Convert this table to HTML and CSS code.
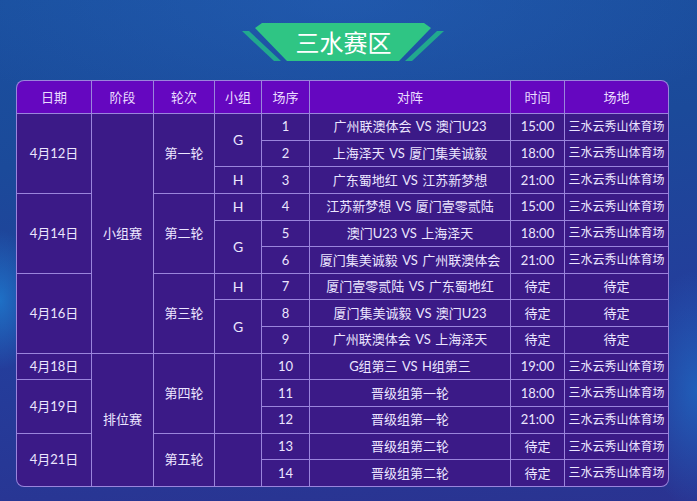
FILE: index.html
```html
<!DOCTYPE html>
<html lang="zh-CN">
<head>
<meta charset="utf-8">
<title>三水赛区</title>
<link rel="stylesheet" href="styles.css">
</head>
<body>
<div class="page">
  <div class="title">
    <svg class="title-bg" width="202" height="38" viewBox="0 0 202 38" aria-hidden="true">
      <polygon class="stripe" points="0,8 7,8 39,38 32,38"/>
      <polygon class="stripe" points="202,8 195,8 163,38 170,38"/>
      <polygon class="shape" points="13,5 20,0 182,0 189,5 157,38 45,38"/>
    </svg>
    <span class="title-text">三水赛区</span>
  </div>

  <div class="table">
    <div class="th first">日期</div>
    <div class="th">阶段</div>
    <div class="th">轮次</div>
    <div class="th">小组</div>
    <div class="th">场序</div>
    <div class="th">对阵</div>
    <div class="th">时间</div>
    <div class="th last">场地</div>

    <div class="td r3">4月12日</div>
    <div class="td r9">小组赛</div>
    <div class="td r3">第一轮</div>
    <div class="td grp r2">G</div>
    <div class="td">1</div>
    <div class="td match">广州联澳体会 VS 澳门U23</div>
    <div class="td">15:00</div>
    <div class="td venue">三水云秀山体育场</div>

    <div class="td">2</div>
    <div class="td match">上海泽天 VS 厦门集美诚毅</div>
    <div class="td">18:00</div>
    <div class="td venue">三水云秀山体育场</div>

    <div class="td grp">H</div>
    <div class="td">3</div>
    <div class="td match">广东蜀地红 VS 江苏新梦想</div>
    <div class="td">21:00</div>
    <div class="td venue">三水云秀山体育场</div>

    <div class="td r3">4月14日</div>
    <div class="td r3">第二轮</div>
    <div class="td grp">H</div>
    <div class="td">4</div>
    <div class="td match">江苏新梦想 VS 厦门壹零贰陆</div>
    <div class="td">15:00</div>
    <div class="td venue">三水云秀山体育场</div>

    <div class="td grp r2">G</div>
    <div class="td">5</div>
    <div class="td match">澳门U23 VS 上海泽天</div>
    <div class="td">18:00</div>
    <div class="td venue">三水云秀山体育场</div>

    <div class="td">6</div>
    <div class="td match">厦门集美诚毅 VS 广州联澳体会</div>
    <div class="td">21:00</div>
    <div class="td venue">三水云秀山体育场</div>

    <div class="td r3">4月16日</div>
    <div class="td r3">第三轮</div>
    <div class="td grp">H</div>
    <div class="td">7</div>
    <div class="td match">厦门壹零贰陆 VS 广东蜀地红</div>
    <div class="td">待定</div>
    <div class="td">待定</div>

    <div class="td grp r2">G</div>
    <div class="td">8</div>
    <div class="td match">厦门集美诚毅 VS 澳门U23</div>
    <div class="td">待定</div>
    <div class="td">待定</div>

    <div class="td">9</div>
    <div class="td match">广州联澳体会 VS 上海泽天</div>
    <div class="td">待定</div>
    <div class="td">待定</div>

    <div class="td">4月18日</div>
    <div class="td r5">排位赛</div>
    <div class="td r3">第四轮</div>
    <div class="td r3"></div>
    <div class="td">10</div>
    <div class="td match">G组第三 VS H组第三</div>
    <div class="td">19:00</div>
    <div class="td venue">三水云秀山体育场</div>

    <div class="td r2">4月19日</div>
    <div class="td">11</div>
    <div class="td match">晋级组第一轮</div>
    <div class="td">18:00</div>
    <div class="td venue">三水云秀山体育场</div>

    <div class="td">12</div>
    <div class="td match">晋级组第一轮</div>
    <div class="td">21:00</div>
    <div class="td venue">三水云秀山体育场</div>

    <div class="td r2 corner-bl">4月21日</div>
    <div class="td r2">第五轮</div>
    <div class="td r2"></div>
    <div class="td">13</div>
    <div class="td match">晋级组第二轮</div>
    <div class="td">待定</div>
    <div class="td venue">三水云秀山体育场</div>

    <div class="td">14</div>
    <div class="td match">晋级组第二轮</div>
    <div class="td">待定</div>
    <div class="td venue corner-br">三水云秀山体育场</div>
  </div>
</div>
</body>
</html>
```

FILE: styles.css
```css
html, body {
  margin: 0;
  padding: 0;
}

body {
  width: 697px;
  height: 501px;
  overflow: hidden;
  font-family: Lato, "Noto Sans CJK SC", "Noto Sans", sans-serif;
  color: #ece6ff;
  background:
    radial-gradient(ellipse 40px 70px at 0px 300px, rgba(30, 120, 205, 0.85), rgba(30, 120, 205, 0) 100%),
    radial-gradient(ellipse 60px 120px at 697px 390px, rgba(30, 110, 200, 0.7), rgba(30, 110, 200, 0) 100%),
    radial-gradient(ellipse 420px 140px at 340px 0px, rgba(40, 100, 190, 0.45), rgba(40, 100, 190, 0) 100%),
    linear-gradient(175deg, #1a509f 0%, #1b4a9a 30%, #243d9b 65%, #2a3391 100%);
}

.page {
  padding-top: 23px;
}

.title {
  position: relative;
  width: 202px;
  height: 38px;
  margin-left: 242px;
  display: flex;
  align-items: center;
  justify-content: center;
}

.title-bg {
  position: absolute;
  left: 0;
  top: 0;
}

.stripe {
  fill: #21a98e;
}

.shape {
  fill: #2fc584;
}

.title-text {
  position: relative;
  font-family: "Noto Sans CJK SC", sans-serif;
  font-size: 24px;
  line-height: 38px;
  color: #ffffff;
  padding-left: 1px;
}

.table {
  margin-top: 19px;
  margin-left: 16px;
  width: 653px;
  height: 407px;
  box-sizing: border-box;
  padding: 1px;
  border-radius: 8px;
  background: #9a85dc;
  display: grid;
  grid-template-columns: 74px 61px 60px 46px 47px 200px 53px 103px;
  grid-template-rows: 32px repeat(14, 1fr);
  gap: 1px;
}

.th,
.td {
  display: flex;
  align-items: center;
  justify-content: center;
  white-space: nowrap;
  font-size: 13px;
  line-height: 1;
}

.th {
  background: #6507c0;
  color: #eadcff;
}

.td {
  background: #3b1a87;
}

.match {
  word-spacing: 1px;
}

.grp {
  font-size: 14px;
}

.venue {
  font-size: 12px;
}

.first {
  border-top-left-radius: 7px;
}

.last {
  border-top-right-radius: 7px;
}

.corner-bl {
  border-bottom-left-radius: 7px;
}

.corner-br {
  border-bottom-right-radius: 7px;
}

.r2 { grid-row: span 2; }
.r3 { grid-row: span 3; }
.r5 { grid-row: span 5; }
.r9 { grid-row: span 9; }
```
